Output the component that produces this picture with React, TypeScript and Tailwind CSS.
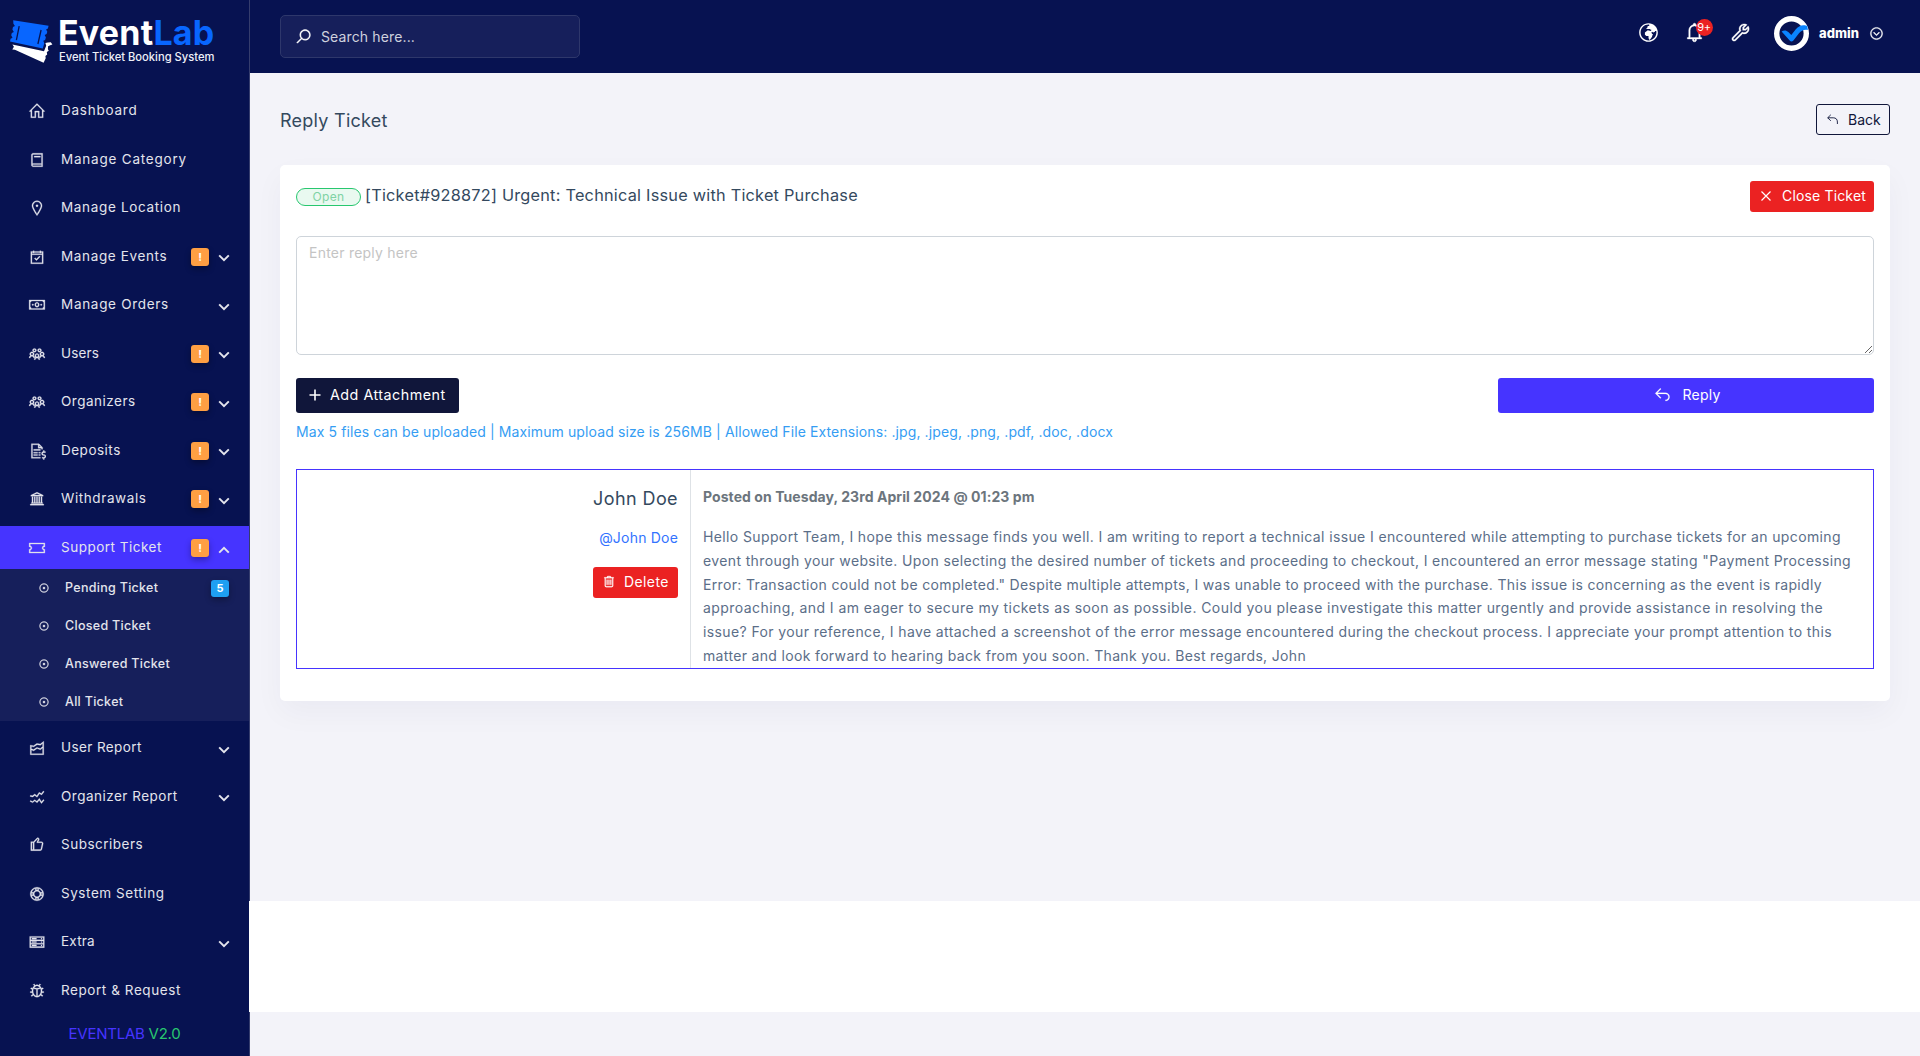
import type { ReactNode } from 'react';
import type { IconType } from 'react-icons';
import {
  LiaBell,
  LiaBookSolid,
  LiaBugSolid,
  LiaCalendarCheck,
  LiaChartAreaSolid,
  LiaChartLineSolid,
  LiaChevronCircleDownSolid,
  LiaDotCircle,
  LiaFileInvoiceDollarSolid,
  LiaGlobeAfricaSolid,
  LiaHomeSolid,
  LiaLifeRing,
  LiaMapMarkerSolid,
  LiaMoneyBillSolid,
  LiaReplySolid,
  LiaSearchSolid,
  LiaServerSolid,
  LiaThumbsUp,
  LiaTicketAltSolid,
  LiaTrashAlt,
  LiaUniversitySolid,
  LiaUsersSolid,
  LiaWrenchSolid,
} from 'react-icons/lia';

type NavEntry = { label: string; icon: IconType; track: string; alert?: boolean; caret?: boolean };

const topNav: NavEntry[] = [
  { label: 'Dashboard', icon: LiaHomeSolid, track: 'tracking-[0.76px]' },
  { label: 'Manage Category', icon: LiaBookSolid, track: 'tracking-[0.78px]' },
  { label: 'Manage Location', icon: LiaMapMarkerSolid, track: 'tracking-[0.66px]' },
  { label: 'Manage Events', icon: LiaCalendarCheck, track: 'tracking-[0.64px]', alert: true, caret: true },
  { label: 'Manage Orders', icon: LiaMoneyBillSolid, track: 'tracking-[0.7px]', caret: true },
  { label: 'Users', icon: LiaUsersSolid, track: 'tracking-[0.15px]', alert: true, caret: true },
  { label: 'Organizers', icon: LiaUsersSolid, track: 'tracking-[0.5px]', alert: true, caret: true },
  { label: 'Deposits', icon: LiaFileInvoiceDollarSolid, track: 'tracking-[0.5px]', alert: true, caret: true },
  { label: 'Withdrawals', icon: LiaUniversitySolid, track: 'tracking-[0.6px]', alert: true, caret: true },
];

const bottomNav: NavEntry[] = [
  { label: 'User Report', icon: LiaChartAreaSolid, track: 'tracking-[0.4px]', caret: true },
  { label: 'Organizer Report', icon: LiaChartLineSolid, track: 'tracking-[0.49px]', caret: true },
  { label: 'Subscribers', icon: LiaThumbsUp, track: 'tracking-[0.5px]' },
  { label: 'System Setting', icon: LiaLifeRing, track: 'tracking-[0.56px]' },
  { label: 'Extra', icon: LiaServerSolid, track: 'tracking-[0.2px]', caret: true },
  { label: 'Report & Request', icon: LiaBugSolid, track: 'tracking-[0.57px]' },
];

const ticketNav = [
  { label: 'Pending Ticket', count: 5 },
  { label: 'Closed Ticket' },
  { label: 'Answered Ticket' },
  { label: 'All Ticket' },
];

const messageLines = [
  { track: 'tracking-[0.378px]', text: 'Hello Support Team, I hope this message finds you well. I am writing to report a technical issue I encountered while attempting to purchase tickets for an upcoming' },
  { track: 'tracking-[0.37px]', text: 'event through your website. Upon selecting the desired number of tickets and proceeding to checkout, I encountered an error message stating "Payment Processing' },
  { track: 'tracking-[0.337px]', text: 'Error: Transaction could not be completed." Despite multiple attempts, I was unable to proceed with the purchase. This issue is concerning as the event is rapidly' },
  { track: 'tracking-[0.427px]', text: 'approaching, and I am eager to secure my tickets as soon as possible. Could you please investigate this matter urgently and provide assistance in resolving the' },
  { track: 'tracking-[0.39px]', text: 'issue? For your reference, I have attached a screenshot of the error message encountered during the checkout process. I appreciate your prompt attention to this' },
  { track: 'tracking-[0.338px]', text: 'matter and look forward to hearing back from you soon. Thank you. Best regards, John' },
];

function Caret({ up }: { up?: boolean }) {
  return (
    <svg width="12" height="8" viewBox="0 0 12 8" fill="none" stroke="currentColor" strokeWidth="2">
      <path d={up ? 'M1.2 6.6 6 1.9l4.8 4.7' : 'M1.2 1.4 6 6.1l4.8-4.7'} />
    </svg>
  );
}

function NavItem({ item, active }: { item: NavEntry; active?: boolean }) {
  const Icon = item.icon;
  return (
    <a
      className={`flex h-[43.5px] shrink-0 items-center pr-[19px] pl-7 text-[13.5px] text-[#e3e4ec] ${
        active ? 'bg-[#4634ff]' : 'mb-[5px]'
      }`}
    >
      <Icon size={18} strokeWidth={0.5} className="mt-px shrink-0 stroke-current" />
      <span className={`-mt-px ml-[15px] flex-1 whitespace-nowrap ${item.track}`}>{item.label}</span>
      {item.alert && (
        <span className="mt-px mr-[9px] flex size-[18px] items-center justify-center rounded-[3px] bg-[#ff9f43] text-[11px] font-bold text-white shadow-[0_3px_6px_rgba(0,0,0,0.3)]">
          !
        </span>
      )}
      {item.caret && (
        <span className={active ? 'mt-1.5' : 'mt-1'}>
          <Caret up={active} />
        </span>
      )}
    </a>
  );
}

function Logo() {
  return (
    <div className="flex h-[89px] shrink-0 pt-5 pl-[9px]">
      <svg width="44" height="44" viewBox="10 20 44 44" className="shrink-0">
        <path
          fill="#0866ff"
          d="M14.2 20.2 49.6 25.8l-.7 2.6-1.8 1 1.2 2.3-.7 2.4-1.9.8 1.2 2.5-.8 2.5-1.8.9 1 2.4-1.5 5.4L11 41.5l.6-2.8 1.9-.9-1.3-2.5.6-2.4 2-1-1.4-2.4.6-2.5 1.9-1-1.500-2.300z"
        />
        <path stroke="#071251" strokeWidth="1.3" d="m20.2 26.2-2.8 14M42.1 30 38.9 44" />
        <path
          fill="#fff"
          d="M13.4 44.6 45 51.3l2.2-5.6-.8-2.8 2.4-.4 3-.2 1.6 2.3-2.2.6-2.1 1-.2 3 .9 1.6-2 1.3.4 2.4-1.8 1.6.3 2.2-2.1 4.5-28.7-13.1-2.6-.3 1.6-2.7z"
        />
      </svg>
      <div className="ml-[5px] flex flex-col whitespace-nowrap">
        <span className="-mt-px h-[27px] text-[34px] leading-[28px] font-bold tracking-[0.2px] text-white">
          Event<span className="text-[#0866ff]">Lab</span>
        </span>
        <span className="mt-[3px] ml-px text-[11.2px] leading-4 font-medium text-[#eef0f8]">Event Ticket Booking System</span>
      </div>
    </div>
  );
}

function Sidebar() {
  return (
    <aside className="flex h-[1056px] w-[249px] shrink-0 flex-col bg-[#071251]">
      <Logo />
      {topNav.map((item) => (
        <NavItem key={item.label} item={item} />
      ))}
      <NavItem active item={{ label: 'Support Ticket', icon: LiaTicketAltSolid, track: 'tracking-[0.5px]', alert: true, caret: true }} />
      <div className="mb-[5px] flex flex-col bg-[#161f5b]">
        {ticketNav.map((item) => (
          <a key={item.label} className="flex h-[38px] items-center pr-5 pl-[38px] text-[12.5px] text-[#e3e4ec]">
            <LiaDotCircle size={12} strokeWidth={0.8} className="stroke-current" />
            <span className="ml-[15px] flex-1 font-medium tracking-[0.3px]">{item.label}</span>
            {item.count && (
              <span className="flex h-[17px] w-[18px] items-center justify-center rounded-[3px] bg-[#1e9ff2] text-[11px] font-bold text-white shadow-[0_3px_6px_rgba(0,0,0,0.3)]">
                {item.count}
              </span>
            )}
          </a>
        ))}
      </div>
      {bottomNav.map((item) => (
        <NavItem key={item.label} item={item} />
      ))}
      <div className="pt-[5px] text-center text-[15px] leading-6 tracking-[-0.25px] text-[#4634ff]">
        EVENTLAB <span className="text-[#28c76f]">V2.0</span>
      </div>
    </aside>
  );
}

function Header() {
  return (
    <header className="flex h-[73px] items-center border-l border-[#353d6d] bg-[#071251] pr-[36px] pl-[30px] text-white">
      <div className="flex h-[43px] w-[300px] items-center rounded-[5px] border border-[#2e376b] bg-[#161f5b] pl-3.5">
        <LiaSearchSolid size={17} strokeWidth={0.8} className="stroke-current" />
        <span className="-mt-px ml-[9px] text-[14px] tracking-[0.13px] text-[#cfd1de]">Search here...</span>
      </div>
      <div className="ml-auto flex items-center pb-1.5">
        <LiaGlobeAfricaSolid size={23} className="-mt-0.5" />
        <div className="relative -mt-0.5 ml-[23px]">
          <LiaBell size={23} strokeWidth={0.5} className="stroke-current" />
          <span className="absolute -top-0.5 left-[12.5px] flex size-[17px] items-center justify-center rounded-full bg-[#eb2222] text-[11px] tracking-tight">
            9+
          </span>
        </div>
        <LiaWrenchSolid size={23} strokeWidth={0.5} className="-mt-0.5 ml-[23px] stroke-current" />
        <svg width="35" height="35" viewBox="0 0 35 35" fill="none" className="ml-[22px]">
          <circle cx="17.5" cy="17.5" r="14.8" stroke="#fff" strokeWidth="5.4" />
          <path fill="#0a84ff" d="M7.6 15.4c2.6-1.5 5-1 6.700.7l3 3 4.300-5.600c2.600-3.400 6.200-5 10.200-4l1.500.5.600 3.900c-4-.6-6.600.6-8.900 3.400l-5.600 7.100c-1.100 1.300-2.600 1.400-3.700.2z" />
        </svg>
        <span className="ml-2.5 text-[13px] font-extrabold">admin</span>
        <LiaChevronCircleDownSolid size={15} strokeWidth={0.8} className="ml-2.5 stroke-current" />
      </div>
    </header>
  );
}

function DangerButton({ children, className }: { children: ReactNode; className: string }) {
  return (
    <button className={`flex h-[31px] items-center rounded-[3px] bg-[#eb2222] pb-0.5 text-[14px] whitespace-nowrap text-white ${className}`}>
      {children}
    </button>
  );
}

function Message() {
  return (
    <div className="mt-[25px] flex h-[200px] border border-[#4634ff]">
      <div className="flex w-[394px] shrink-0 flex-col items-end border-r border-[#dee2e6] pt-4 pr-3">
        <h5 className="text-[18px] leading-[25px] tracking-[0.4px] text-[#34495e]">John Doe</h5>
        <p className="mt-[15px] text-[14px] leading-6 tracking-[0.2px] text-[#3273ff]">@John Doe</p>
        <DangerButton className="mt-[17px] w-[85px] pl-2.5">
          <LiaTrashAlt size={15} strokeWidth={0.5} className="-ml-0.5 stroke-current" />
          <span className="ml-2 tracking-[0.4px]">Delete</span>
        </DangerButton>
      </div>
      <div className="pt-[15px] pl-3">
        <p className="text-[14px] leading-6 font-bold tracking-[0.073px] text-[#6c757d]">Posted on Tuesday, 23rd April 2024 @ 01:23 pm</p>
        <div className="mt-4 text-[14px] leading-[23.8px] text-[#5b6e88]">
          {messageLines.map((line) => (
            <p key={line.text} className={`whitespace-nowrap ${line.track}`}>
              {line.text}
            </p>
          ))}
        </div>
      </div>
    </div>
  );
}

function TicketCard() {
  return (
    <section className="mt-[30px] h-[536px] w-[1610px] rounded-[5px] bg-white px-4 pt-4 shadow-[0_12px_30px_rgba(8,21,66,0.04)]">
      <div className="flex h-[31px] items-center">
        <span className="mt-px flex h-[18px] w-[65px] items-center justify-center rounded-full border border-[#28c76f] bg-[#e9f9f0] text-[12px] tracking-[0.3px] text-[#7fd3a4]">
          Open
        </span>
        <h6 className="ml-1 pb-[3px] text-[16.3px] tracking-[0.23px] text-[#34495e]">
          [Ticket#928872] Urgent: Technical Issue with Ticket Purchase
        </h6>
        <DangerButton className="ml-auto w-[124px] pl-[11px]">
          <svg width="10" height="10" viewBox="0 0 10 10" stroke="currentColor" strokeWidth="1.2">
            <path d="m.5.5 9 9m0-9-9 9" />
          </svg>
          <span className="ml-[11px] tracking-[0.16px]">Close Ticket</span>
        </DangerButton>
      </div>
      <textarea
        placeholder="Enter reply here"
        className="mt-6 block h-[119px] w-full resize rounded-[5px] border border-[#ced4da] bg-white px-3 py-1 text-[14px] leading-6 tracking-[0.23px] placeholder:text-[#c4c4c4]"
      />
      <div className="mt-[23px] flex h-[35px] justify-between text-[14px] text-white">
        <button className="flex w-[163px] items-center rounded-[3px] bg-[#10163a] pb-px pl-[13px]">
          <svg width="12" height="12" viewBox="0 0 12 12" stroke="currentColor" strokeWidth="1.6">
            <path d="M6 .5v11M.5 6h11" />
          </svg>
          <span className="ml-[9px] text-[14.3px] tracking-[0.5px] whitespace-nowrap">Add Attachment</span>
        </button>
        <button className="flex w-[376px] items-center justify-center rounded-[3px] bg-[#4634ff] pb-0.5 pl-px">
          <LiaReplySolid size={19} strokeWidth={0.3} className="stroke-current" />
          <span className="ml-[11px] tracking-[0.22px]">Reply</span>
        </button>
      </div>
      <p className="mt-[7px] text-[14px] leading-6 tracking-[0.114px] whitespace-nowrap text-[#359df3]">
        Max 5 files can be uploaded | Maximum upload size is 256MB | Allowed File Extensions: .jpg, .jpeg, .png, .pdf, .doc, .docx
      </p>
      <Message />
    </section>
  );
}

export default function App() {
  return (
    <div className="flex h-[1056px] w-[1920px] overflow-hidden bg-[#f3f3f9] font-[Inter,sans-serif]">
      <Sidebar />
      <div className="flex flex-1 flex-col">
        <Header />
        <main className="h-[828px] border-l border-[#353d6d] pt-[31px] pr-[30px] pl-[30px]">
          <div className="flex h-[31px] items-center justify-between">
            <h6 className="pt-px text-[18px] tracking-[0.26px] text-[#34495e]">Reply Ticket</h6>
            <button className="flex h-[31px] w-[74px] items-center rounded-[3px] border border-[#10163a] pb-px pl-2.5 text-[14px] text-[#10163a]">
              <svg width="11" height="11" viewBox="0 0 11 11" fill="none" stroke="currentColor" strokeWidth="0.9">
                <path d="M3.800.8.700 3.800l3.100 3M.8 3.800h5.400c2.700 0 4.200 1.500 4.200 4.200v2" />
              </svg>
              <span className="ml-2.5">Back</span>
            </button>
          </div>
          <TicketCard />
        </main>
        <div className="h-[111px] bg-white" />
        <div className="flex-1 border-l border-[#353d6d]" />
      </div>
    </div>
  );
}
